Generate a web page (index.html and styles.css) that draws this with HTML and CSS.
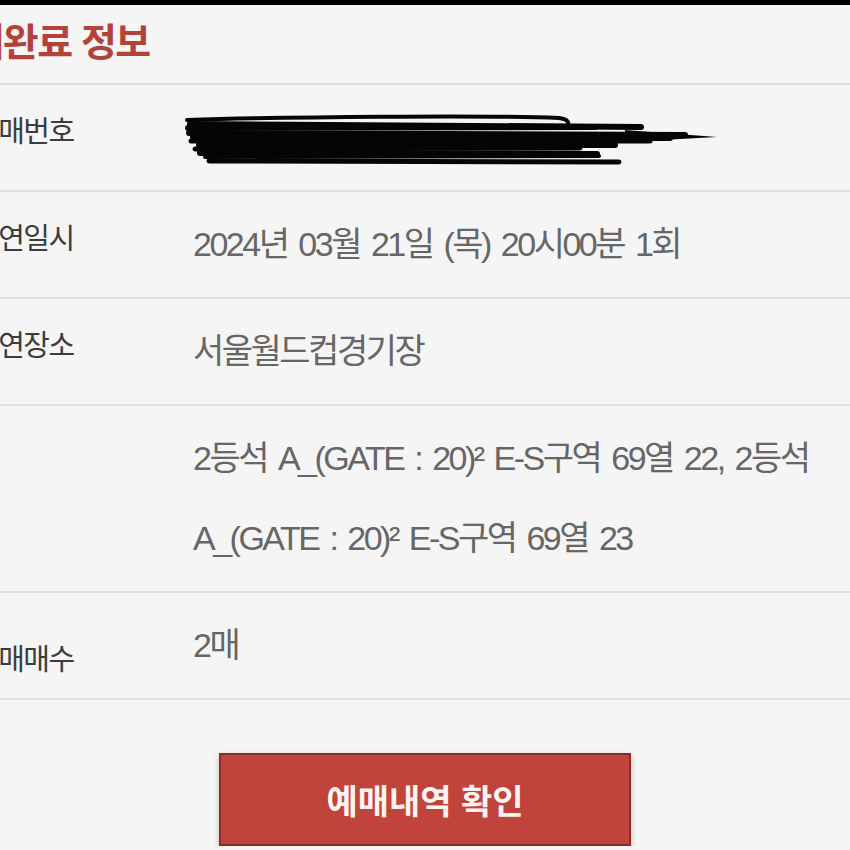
FILE: index.html
```html
<!DOCTYPE html>
<html lang="ko">
  <head>
    <meta charset="UTF-8" />
    <meta name="viewport" content="width=device-width, initial-scale=1.0" />
    <title>예매완료 정보</title>
    <link rel="stylesheet" href="styles.css">
  </head>
  <body>
    <div class="top-bar"></div>
    <div class="container">
      <h1 class="title">예매완료 정보</h1>

      <div class="info">
        <div class="row">
          <div class="label">예매번호</div>
          <div class="value">
            <!-- number scribbled out by hand -->
            <svg class="scribble" width="560" height="70" viewBox="0 0 560 70">
              <g fill="none" stroke="#050505" stroke-linecap="round">
                <path d="M2 20 C 100 17, 300 15, 374 18 C 382 19, 385 22, 382 26" stroke-width="4" />
                <path d="M5 24 L 456 27" stroke-width="6" />
                <path d="M3 28 L 410 27" stroke-width="6" />
                <path d="M4 33 L 500 35" stroke-width="6" />
                <path d="M8 37 L 485 38" stroke-width="6" />
                <path d="M6 41 L 465 41" stroke-width="5" />
                <path d="M14 45 L 430 45" stroke-width="6" />
                <path d="M10 49 L 395 48" stroke-width="5" />
                <path d="M15 53 L 412 54" stroke-width="6" />
                <path d="M20 57 L 414 56" stroke-width="4" />
                <path d="M24 61 L 434 62" stroke-width="5" />
              </g>
              <path d="M440 30 L 532 37 L 440 42 Z" fill="#050505" />
            </svg>
          </div>
        </div>
        <div class="row">
          <div class="label">공연일시</div>
          <div class="value">2024년 03월 21일 (목) 20시00분 1회</div>
        </div>
        <div class="row">
          <div class="label">공연장소</div>
          <div class="value">서울월드컵경기장</div>
        </div>
        <div class="row">
          <div class="label"></div>
          <div class="value">2등석 A_(GATE : 20)² E-S구역 69열 22, 2등석 A_(GATE : 20)² E-S구역 69열 23</div>
        </div>
        <div class="row">
          <div class="label label-low">예매매수</div>
          <div class="value">2매</div>
        </div>
      </div>

      <div class="actions">
        <button class="btn">예매내역 확인</button>
      </div>
    </div>
  </body>
</html>
```

FILE: styles.css
```css
* {
  margin: 0;
  padding: 0;
  box-sizing: border-box;
}
body {
  background-color: #f5f5f5;
  font-family: "Liberation Sans", "Noto Sans CJK KR", sans-serif;
  overflow: hidden;
}
.top-bar {
  height: 5px;
  background-color: #000;
}
.title {
  height: 80px;
  line-height: 68px;
  margin-left: -66px;
  font-family: "Noto Sans CJK KR", sans-serif;
  font-size: 39px;
  font-weight: 700;
  letter-spacing: -1.5px;
  color: #b4423b;
  border-bottom: 2px solid #dedede;
}
.row {
  display: grid;
  grid-template-columns: 220px 1fr;
  margin-left: -27px;
  padding: 12px 0 13px;
  border-bottom: 2px solid #e0e0e0;
}
.label {
  padding-top: 12px;
  line-height: 40px;
  font-family: "Noto Sans CJK KR", sans-serif;
  font-size: 29px;
  letter-spacing: -1.5px;
  color: #3c3c3c;
}
.label-low {
  padding-top: 32px;
}
.value {
  min-height: 80px;
  padding-right: 20px;
  line-height: 80px;
  font-size: 34px;
  letter-spacing: -2.5px;
  word-spacing: 4px;
  color: #666;
}
.scribble {
  display: block;
  margin: 3px 0 0 -8px;
}
.actions {
  display: flex;
  justify-content: center;
  padding-top: 53px;
}
.btn {
  width: 412px;
  height: 93px;
  font-family: "Noto Sans CJK KR", sans-serif;
  font-size: 34px;
  font-weight: 700;
  color: #fdf3f1;
  background-color: #c1443c;
  border: 2px solid #8f2b27;
  box-shadow: 0 3px 6px rgba(0, 0, 0, 0.25);
  cursor: pointer;
}
```
